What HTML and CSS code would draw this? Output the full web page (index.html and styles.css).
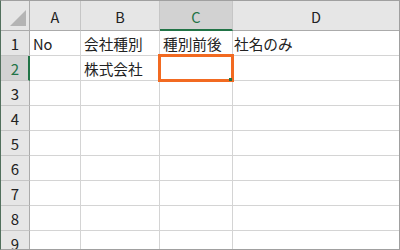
FILE: index.html
```html
<!DOCTYPE html>
<html lang="ja">
<head>
    <meta charset="UTF-8">
    <title>Sheet</title>
    <link rel="stylesheet" href="styles.css">
</head>
<body>
    <div class="sheet">
        <!-- column headers -->
        <div class="corner">
            <svg width="28" height="29" viewBox="0 0 28 29"><polygon points="25,9 25,25 9,25" fill="#b4b4b4"/></svg>
        </div>
        <div class="col-head">A</div>
        <div class="col-head">B</div>
        <div class="col-head active">C</div>
        <div class="col-head last">D</div>

        <!-- row 1 -->
        <div class="row-head">1</div>
        <div class="cell">No</div>
        <div class="cell">会社種別</div>
        <div class="cell">種別前後</div>
        <div class="cell last">社名のみ</div>

        <!-- row 2 -->
        <div class="row-head active">2</div>
        <div class="cell"></div>
        <div class="cell">株式会社</div>
        <div class="cell selected"><span class="handle"></span></div>
        <div class="cell last"></div>

        <div class="row-head">3</div>
        <div class="cell"></div><div class="cell"></div><div class="cell"></div><div class="cell last"></div>
        <div class="row-head">4</div>
        <div class="cell"></div><div class="cell"></div><div class="cell"></div><div class="cell last"></div>
        <div class="row-head">5</div>
        <div class="cell"></div><div class="cell"></div><div class="cell"></div><div class="cell last"></div>
        <div class="row-head">6</div>
        <div class="cell"></div><div class="cell"></div><div class="cell"></div><div class="cell last"></div>
        <div class="row-head">7</div>
        <div class="cell"></div><div class="cell"></div><div class="cell"></div><div class="cell last"></div>
        <div class="row-head">8</div>
        <div class="cell"></div><div class="cell"></div><div class="cell"></div><div class="cell last"></div>
        <div class="row-head">9</div>
        <div class="cell"></div><div class="cell"></div><div class="cell"></div><div class="cell last"></div>
    </div>
</body>
</html>
```

FILE: styles.css
```css
body {
    margin: 0;
    background: #ffffff;
    font-family: "Noto Sans CJK JP", "Noto Sans", sans-serif;
}

.sheet {
    box-sizing: border-box;
    width: 400px;
    height: 250px;
    overflow: hidden;
    border: 1px solid #a0a0a0;
    border-left-color: #52705d;
    display: grid;
    grid-template-columns: 29px 51px 79px 73px 166px;
    grid-template-rows: 30px;
    grid-auto-rows: 25px;
}

.sheet > div {
    box-sizing: border-box;
}

.corner {
    background: #e6e6e6;
    border-right: 1px solid #ababab;
    border-bottom: 1px solid #ababab;
}

.corner svg {
    display: block;
}

.col-head {
    background: #e6e6e6;
    border-right: 1px solid #c6c6c6;
    border-bottom: 1px solid #ababab;
    color: #222;
    font-size: 14.5px;
    display: flex;
    align-items: flex-end;
    justify-content: center;
    padding-bottom: 3px;
}

.col-head.last {
    border-right: none;
}

.col-head.active {
    background: #d2d2d2;
    color: #217346;
    border-bottom: 2px solid #217346;
    padding-bottom: 2px;
}

.row-head {
    background: #e6e6e6;
    border-right: 1px solid #ababab;
    border-bottom: 1px solid #c6c6c6;
    color: #222;
    font-size: 15px;
    display: flex;
    align-items: center;
    justify-content: center;
}

.row-head.active {
    background: #d2d2d2;
    color: #217346;
    border-right: 2px solid #217346;
    padding-left: 1px;
}

.cell {
    border-right: 1px solid #d4d4d4;
    border-bottom: 1px solid #d4d4d4;
    font-size: 14.67px;
    color: #222;
    padding: 1px 0 0 3px;
    line-height: 24px;
    white-space: nowrap;
}

.cell.last {
    border-right: none;
    padding-left: 1px;
}

.cell.selected {
    position: relative;
}

.cell.selected::after {
    content: "";
    position: absolute;
    left: -2px;
    top: -2px;
    right: -2px;
    bottom: -2px;
    border: 3px solid #f26a21;
}

.handle {
    position: absolute;
    left: 69px;
    top: 22px;
    width: 3px;
    height: 3px;
    background: #217346;
    z-index: 1;
}
```
